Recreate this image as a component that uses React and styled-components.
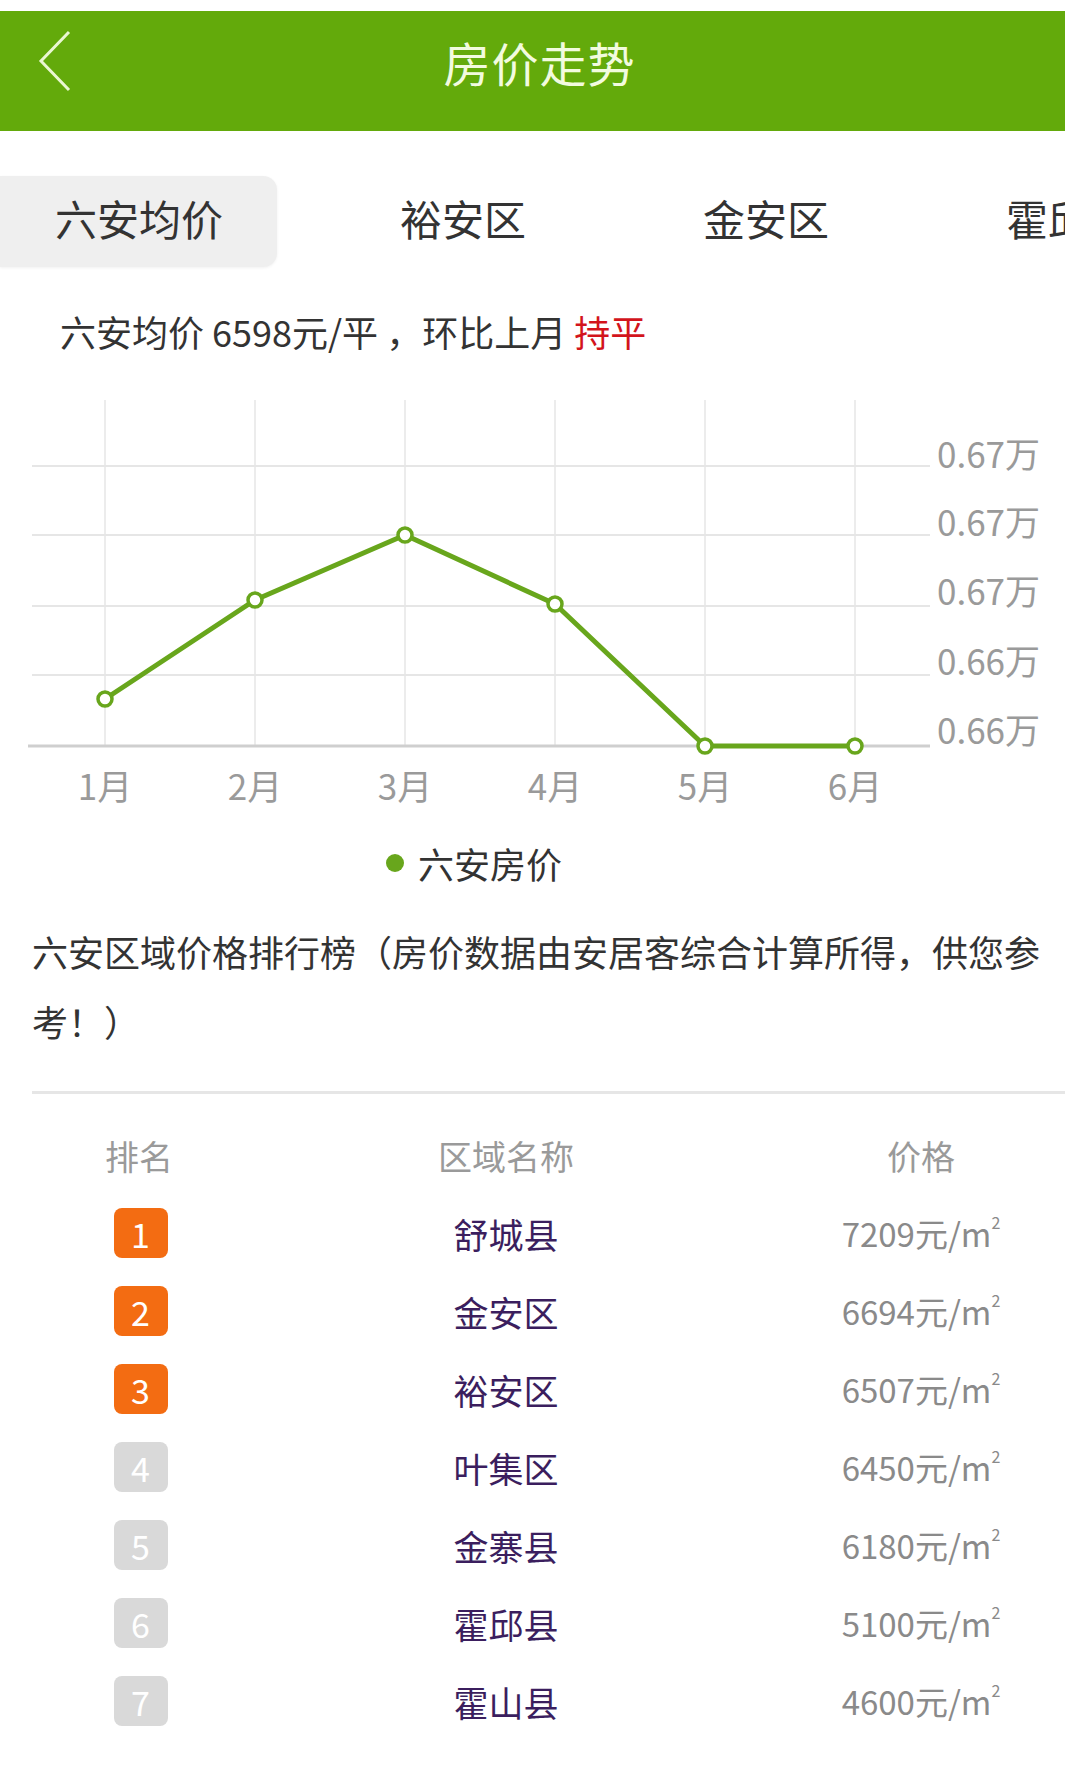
import React from 'react';
import styled, { createGlobalStyle } from 'styled-components';

const GlobalStyle = createGlobalStyle`
  html, body {
    margin: 0;
    padding: 0;
    background: #ffffff;
  }
  body {
    font-family: "Noto Sans CJK SC", "Noto Sans", "Liberation Sans", sans-serif;
    color: #333333;
  }
`;

const Page = styled.div`
  width: 1065px;
  padding-top: 11px;
  background: #ffffff;
  overflow: hidden;
`;

const Header = styled.header`
  height: 120px;
  box-sizing: border-box;
  padding-bottom: 20px;
  background: #63aa0b;
  display: grid;
  grid-template-columns: 110px 1fr 96px;
  align-items: center;
`;

const BackButton = styled.div`
  display: flex;
  align-items: center;
  padding-left: 38px;
`;

const Title = styled.h1`
  margin: 0;
  text-align: center;
  font-size: 47px;
  font-weight: 400;
  color: #f2fbdf;
  letter-spacing: 1px;
`;

const TabStrip = styled.div`
  margin-top: 45px;
  display: flex;
  gap: 68px;
  white-space: nowrap;
`;

const Tab = styled.div`
  flex: none;
  height: 91px;
  box-sizing: border-box;
  display: flex;
  align-items: center;
  padding: 0 54px 8px 55px;
  font-size: 42px;
  color: #333333;
  border-radius: 0 14px 14px 0;
  background: ${(p) => (p.$active ? '#efefef' : 'transparent')};
  box-shadow: ${(p) => (p.$active ? '0 1px 3px rgba(0,0,0,0.06)' : 'none')};
`;

const Summary = styled.p`
  margin: 39px 0 0;
  padding-left: 60px;
  height: 50px;
  line-height: 50px;
  font-size: 36px;
  color: #333333;
`;

const Flat = styled.span`
  color: #d3141c;
`;

const ChartBox = styled.div`
  margin-top: 24px;
  height: 440px;
`;

const Legend = styled.div`
  height: 86px;
  display: flex;
  align-items: center;
  justify-content: center;
  gap: 14px;
  padding-right: 117px;
  font-size: 36px;
  color: #333333;
`;

const LegendDot = styled.span`
  width: 18px;
  height: 18px;
  border-radius: 50%;
  background: #68a61c;
`;

const Heading = styled.p`
  margin: 10px 0 0;
  padding: 0 20px 0 32px;
  font-size: 36px;
  line-height: 70px;
  color: #333333;
`;

const Divider = styled.div`
  margin: 35px 0 0 32px;
  height: 3px;
  background: #e6e6e6;
`;

const Table = styled.div`
  margin-top: 22px;
`;

const Row = styled.div`
  height: 78px;
  display: grid;
  grid-template-columns: 214px 520px 1fr;
  padding-left: 32px;
  align-items: center;
  text-align: center;
`;

const HeadCell = styled.div`
  font-size: 34px;
  color: #9a9a9a;
  padding-left: ${(p) => (p.$last ? '11px' : '0')};
`;

const RankCell = styled.div`
  display: flex;
  justify-content: center;
  padding-left: 3px;
`;

const Badge = styled.div`
  width: 54px;
  height: 50px;
  border-radius: 8px;
  display: flex;
  align-items: center;
  justify-content: center;
  font-size: 34px;
  color: #ffffff;
  background: ${(p) => (p.$top ? '#f36c12' : '#d9d9d9')};
`;

const NameCell = styled.div`
  font-size: 35px;
  color: #3b1e5e;
`;

const PriceCell = styled.div`
  font-size: 33px;
  color: #8a8a8a;
  padding-left: 11px;
  sup {
    font-size: 16px;
    vertical-align: 18px;
    line-height: 0;
  }
`;

const tabs = ['六安均价', '裕安区', '金安区', '霍邱县'];

const ranking = [
  ['舒城县', '7209'],
  ['金安区', '6694'],
  ['裕安区', '6507'],
  ['叶集区', '6450'],
  ['金寨县', '6180'],
  ['霍邱县', '5100'],
  ['霍山县', '4600'],
];

const months = ['1月', '2月', '3月', '4月', '5月', '6月'];
const xs = [105, 255, 405, 555, 705, 855];
const values = [319, 220, 155, 224, 366, 366];
const gridYs = [86, 155, 226, 295];
const yLabels = ['0.67万', '0.67万', '0.67万', '0.66万', '0.66万'];
const yLabelPos = [88, 156, 225, 295, 364];

function PriceChart() {
  const points = xs.map((x, i) => `${x},${values[i]}`).join(' ');
  return (
    <svg width="1065" height="440" viewBox="0 0 1065 440">
      {xs.map((x) => (
        <line key={x} x1={x} y1="20" x2={x} y2="365" stroke="#ececec" strokeWidth="2" />
      ))}
      {gridYs.map((y) => (
        <line key={y} x1="32" y1={y} x2="930" y2={y} stroke="#e6e6e6" strokeWidth="2" />
      ))}
      <line x1="28" y1="366" x2="930" y2="366" stroke="#cfcfcf" strokeWidth="3" />
      {yLabels.map((t, i) => (
        <text
          key={i}
          x="937"
          y={yLabelPos[i]}
          fontSize="35"
          fill="#9a9a9a"
          fontFamily="Noto Sans CJK SC, sans-serif"
        >
          {t}
        </text>
      ))}
      {months.map((m, i) => (
        <text
          key={m}
          x={xs[i]}
          y="420"
          fontSize="35"
          fill="#9a9a9a"
          textAnchor="middle"
          fontFamily="Noto Sans CJK SC, sans-serif"
        >
          {m}
        </text>
      ))}
      <polyline points={points} fill="none" stroke="#68a61c" strokeWidth="5" strokeLinejoin="round" />
      {xs.map((x, i) => (
        <circle key={x} cx={x} cy={values[i]} r="7" fill="#ffffff" stroke="#68a61c" strokeWidth="3.5" />
      ))}
    </svg>
  );
}

export default function App() {
  return (
    <>
      <GlobalStyle />
      <Page>
        <Header>
          <BackButton>
            <svg width="34" height="62" viewBox="0 0 34 62">
              <polyline points="31,2 3,31 31,60" fill="none" stroke="#eaf7d2" strokeWidth="3" />
            </svg>
          </BackButton>
          <Title>房价走势</Title>
          <div />
        </Header>

        <TabStrip>
          {tabs.map((t, i) => (
            <Tab key={t} $active={i === 0}>{t}</Tab>
          ))}
        </TabStrip>

        <Summary>
          六安均价 6598元/平 ，环比上月 <Flat>持平</Flat>
        </Summary>

        <ChartBox>
          <PriceChart />
        </ChartBox>

        <Legend>
          <LegendDot />
          六安房价
        </Legend>

        <Heading>六安区域价格排行榜（房价数据由安居客综合计算所得，供您参考！）</Heading>

        <Divider />

        <Table>
          <Row>
            <HeadCell>排名</HeadCell>
            <HeadCell>区域名称</HeadCell>
            <HeadCell $last>价格</HeadCell>
          </Row>
          {ranking.map(([name, price], i) => (
            <Row key={name}>
              <RankCell>
                <Badge $top={i < 3}>{i + 1}</Badge>
              </RankCell>
              <NameCell>{name}</NameCell>
              <PriceCell>
                {price}元/m<sup>2</sup>
              </PriceCell>
            </Row>
          ))}
        </Table>
      </Page>
    </>
  );
}
